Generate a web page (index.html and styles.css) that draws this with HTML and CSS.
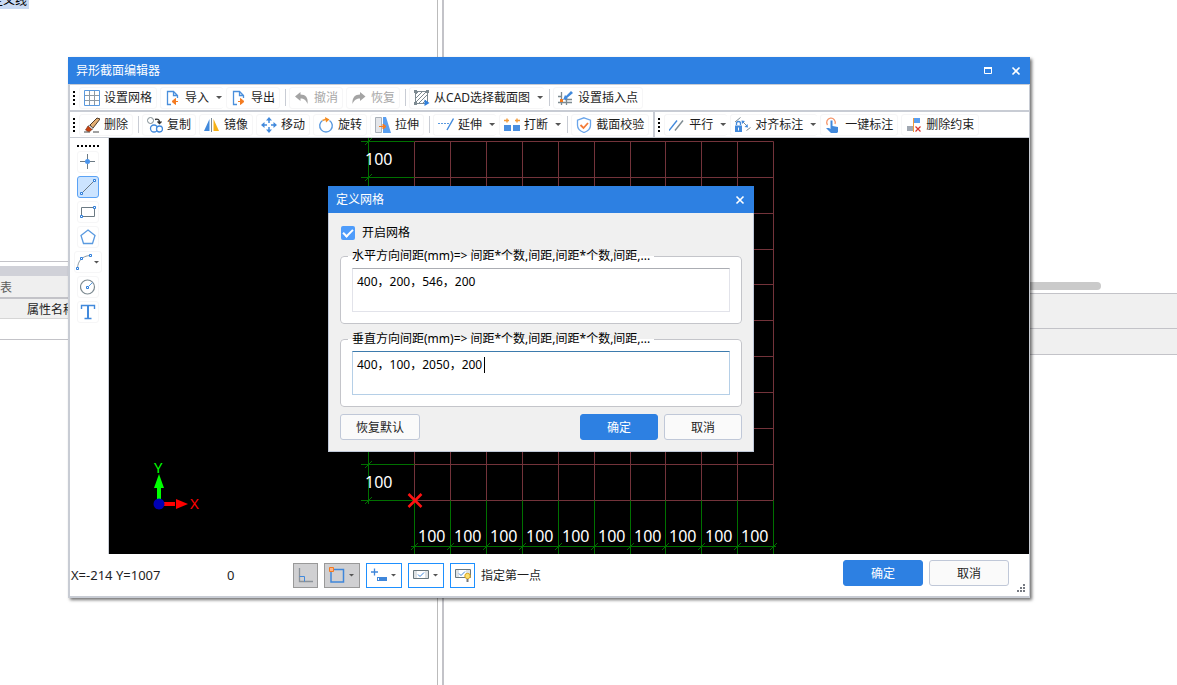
FILE: index.html
```html
<!DOCTYPE html>
<html lang="zh-CN">
<head>
<meta charset="utf-8">
<title>异形截面编辑器</title>
<link rel="stylesheet" href="styles.css">
</head>
<body>
<div class="desktop">
  <div class="desk-left">
    <div class="desk-tree"><span class="tree-item">定义线</span></div>
    <div class="desk-band"></div>
    <div class="desk-tab">表</div>
    <div class="desk-head">属性名称</div>
    <div class="desk-row"></div>
  </div>
  <div class="desk-split"></div>
  <div class="desk-right">
    <div class="desk-view"><div class="desk-scroll"></div></div>
    <div class="desk-panel"></div>
    <div class="desk-panel desk-panel-last"></div>
  </div>
</div>

<main class="window">
  <header class="titlebar">
    <h1>异形截面编辑器</h1>
    <button class="win-btn" aria-label="最大化"><svg width="10" height="10"><path d="M1.500 2h7v5.500h-7z" fill="none" stroke="#fff"/><path d="M1 2h8" stroke="#fff" stroke-width="2"/></svg></button>
    <button class="win-btn" aria-label="关闭"><svg width="10" height="10"><path d="M1.500 1.500l7 7M8.500 1.500l-7 7" stroke="#fff" stroke-width="1.600"/></svg></button>
  </header>

  <div class="toolbar-row">
    <div class="toolbar">
      <i class="grip"></i>
      <button class="tool"><svg class="ic"><path d="M5.500 1v14M10.500 1v14M1 5.500h14M1 10.500h14" stroke="#8e9aa4"/><path d="M.5.5h15v15H.5z" fill="none" stroke="#5a9ae0"/></svg>设置网格</button>
      <button class="tool drop"><svg class="ic"><path d="M6 14.500H2.500V1.500h6l4 4V8M8.500 1.500v4h4" fill="none" stroke="#4a8fdc" stroke-width="1.300"/><path d="M13 11.500H9M10.500 8.500l-3.500 3 3.500 3z" fill="#f47b20" stroke="#f47b20"/></svg>导入<i class="caret"></i></button>
      <button class="tool"><svg class="ic"><path d="M6 14.500H2.500V1.500h6l4 4V8M8.500 1.500v4h4" fill="none" stroke="#4a8fdc" stroke-width="1.300"/><path d="M7 11.500h4M9.500 8.500l3.500 3-3.500 3z" fill="#f47b20" stroke="#f47b20"/></svg>导出</button>
      <i class="sep"></i>
      <button class="tool" disabled><svg class="ic"><path d="M1 6.500L6.500 2v2.500c5 0 8 3 7 9.500C12 10 10 8.500 6.500 8.500V11z" fill="#a4a4a4"/></svg>撤消</button>
      <button class="tool" disabled><svg class="ic"><path d="M14.500 6.500L9 2v2.500c-5 0-8 3-7.500 9.500C3 10 5.500 8.500 9 8.500V11z" fill="#a4a4a4"/></svg>恢复</button>
      <i class="sep"></i>
      <button class="tool drop"><svg class="ic"><path d="M2 12L12 2M2 8l6-6M4 14l9-9M8 14l4-4M2 4l2-2" stroke="#7d8a91"/><path d="M1.500 1.500h12v12h-12z" fill="none" stroke="#7d8a91"/><path d="M0 0h3v3H0zM12 0h3v3h-3zM0 12h3v3H0z" fill="#7d8a91"/><path d="M10.500 9.500l5 3.500-5 3z" fill="#2f7fdc"/></svg>从CAD选择截面图<i class="caret"></i></button>
      <i class="sep"></i>
      <button class="tool"><svg class="ic"><path d="M3.500 2v13M8.500 8v7M0 6.500h4M7 9.500h7M0 12.500h14" stroke="#7d8a91" stroke-width="1.300"/><path d="M5 10l2-5 1 1 5-5 2 2-6 5 .5 1z" fill="#4189dc"/><path d="M2 9h3v3H2z" fill="#f47b20"/></svg>设置插入点</button>
    </div>
  </div>

  <div class="toolbar-row">
    <div class="toolbar">
      <i class="grip"></i>
      <button class="tool"><svg class="ic"><path d="M0 15h6M9 15h6" stroke="#444"/><path d="M6 8l7-7 3 1-7 9z" fill="#e2ae72" stroke="#4f3928"/><path d="M5 8l4 3-1 2-4-3z" fill="#f2f2f2" stroke="#555" stroke-width=".6"/><path d="M4 9l4 3.500C6 15 4 15 1.500 13z" fill="#c9410e" stroke="#703016" stroke-width=".6"/></svg>删除</button>
      <i class="sep"></i>
      <button class="tool"><svg class="ic"><circle cx="3.500" cy="3.500" r="3" fill="none" stroke="#7d8a91"/><circle cx="7" cy="11.500" r="3.500" fill="none" stroke="#4189dc" stroke-width="1.300"/><circle cx="12.500" cy="12" r="3" fill="#fff" stroke="#4189dc" stroke-width="1.300"/><path d="M8 2.500c3-1 4.500 0 4.500 3M10.500 4.500l2 2 2-2" fill="none" stroke="#333" stroke-width="1.400"/></svg>复制</button>
      <button class="tool"><svg class="ic"><path d="M5.500 2v12H0z" fill="#4189dc"/><path d="M7.500 1v14" stroke="#7d8a91"/><path d="M9.500 2v12H15z" fill="#f7b116"/></svg>镜像</button>
      <button class="tool"><svg class="ic"><path d="M8 2v4M8 10v4M2 8h4M10 8h4" stroke="#4189dc" stroke-width="1.500"/><path d="M8 0l3 3.500H5zM8 16l3-3.500H5zM0 8l3.500-3v6zM16 8l-3.500-3v6z" fill="#4189dc"/></svg>移动</button>
      <button class="tool"><svg class="ic"><path d="M11.500 3.500a6.300 6.300 0 1 1-7 0" fill="none" stroke="#5a9ae0" stroke-width="1.400"/><path d="M4.500 3.500l4-1.500" stroke="#f29a38" stroke-width="1.400"/><path d="M7 0l4.500 2.500L8 5.500z" fill="#f58a1c"/></svg>旋转</button>
      <button class="tool"><svg class="ic"><path d="M.5.5h6v15h-6z" fill="#e4e6ea" stroke="#a9b0b8"/><path d="M8 0h3l5 16H8z" fill="#5a9ff0"/><path d="M4 9.500h5M8 7l3 2.500L8 12z" stroke="#f47b20" fill="#f47b20"/></svg>拉伸</button>
      <i class="sep"></i>
      <button class="tool drop"><svg class="ic"><path d="M0 6.500h11" stroke="#5a9ae0" stroke-dasharray="2 1"/><path d="M15.500 1.500L9 13" stroke="#4189dc" stroke-width="1.400"/></svg>延伸<i class="caret"></i></button>
      <button class="tool drop"><svg class="ic"><path d="M0 8h7v6H0zM9 8h7v6H9z" fill="#4a8fe0"/><path d="M0 3.500h5M3 1.500v4M11 3.500h5M13 1.500v4" stroke="#f29a38" stroke-width="1.400"/></svg>打断<i class="caret"></i></button>
      <i class="sep"></i>
      <button class="tool"><svg class="ic"><path d="M8 .8l6.500 2.400v5C14.500 11.500 12 14 8 15.500 4 14 1.500 11.500 1.500 8.200v-5z" fill="#fff" stroke="#6aa5ea" stroke-width="1.300"/><path d="M4.500 8l3 3 4.500-5" fill="none" stroke="#f47b38" stroke-width="1.800"/></svg>截面校验</button>
    </div>
    <div class="toolbar">
      <i class="grip"></i>
      <button class="tool drop"><svg class="ic"><path d="M0 13.500L8 3.500" stroke="#4189dc" stroke-width="1.400"/><path d="M6 13.500l8-10" stroke="#7d8a91" stroke-width="1.400"/></svg>平行<i class="caret"></i></button>
      <button class="tool drop"><svg class="ic"><path d="M0 8.500h7V15H0z" fill="#4189dc"/><path d="M1.500 8V6.500a2 2 0 0 1 4 0V8" fill="none" stroke="#4189dc" stroke-width="1.300"/><path d="M3 10.500h1v3H3z" fill="#fff"/><path d="M0 5l5.500-4.500M8 5l4 4M11.500 13.500l4-3" stroke="#7d8a91"/><path d="M6.500 3.500l3.500.5-3 3zM13 10.500l-3.500-.5 3-3z" fill="#4189dc"/></svg>对齐标注<i class="caret"></i></button>
      <button class="tool"><svg class="ic"><path d="M2.500 8a4.300 4.300 0 1 1 7.500-1" fill="none" stroke="#f5956a" stroke-width="1.300"/><path d="M5.500 3.500h2V9l5.500 1v5l-1 1H6l-5-5h3l1.500 1z" fill="#4189dc"/></svg>一键标注</button>
      <button class="tool"><svg class="ic"><path d="M1 9h6v5H1z" fill="#a1a8b2"/><path d="M8 1h6v5H8z" fill="#5a9ff0"/><path d="M7.500 1v14" stroke="#f29a38"/><path d="M9.500 9.500l5 5M14.500 9.500l-5 5" stroke="#d9342b" stroke-width="1.200"/></svg>删除约束</button>
    </div>
  </div>

  <div class="work">
    <nav class="side" aria-label="绘图工具">
      <i class="grip grip-h"></i>
      <button class="draw" aria-label="点"><svg class="ic"><path d="M7.500 0v5M7.500 10v5M0 7.500h5M10 7.500h5" stroke="#6c7a84"/><circle cx="7.500" cy="7.500" r="2.500" fill="#4a94ec"/></svg></button>
      <button class="draw active" aria-label="直线"><svg class="ic"><path d="M1 15L15 1" stroke="#6c7a84"/><path d="M.5 13.500h2v2h-2zM13.500.5h2v2h-2z" class="node"/></svg></button>
      <button class="draw" aria-label="矩形"><svg class="ic"><path d="M1.500 3.500h13v9h-13z" fill="none" stroke="#6c7a84"/><path d="M.5 11.500h2v2h-2zM13.500 2.500h2v2h-2z" class="node"/></svg></button>
      <button class="draw" aria-label="多边形"><svg class="ic"><path d="M8 1l7 5.500-2.500 8h-9L1 6.500z" fill="none" stroke="#5a9ae0" stroke-width="1.300"/></svg></button>
      <button class="draw draw-drop" aria-label="圆弧"><svg class="ic"><path d="M1.500 14C2 7 6 2 14 1.500" fill="none" stroke="#8d9aa4"/><path d="M.5 13.500h2v2h-2zM4.500 3.500h2v2h-2zM13.500.5h2v2h-2z" class="node"/></svg><i class="caret"></i></button>
      <button class="draw" aria-label="圆"><svg class="ic"><circle cx="7.500" cy="8" r="7" fill="none" stroke="#7d8a91" stroke-width="1.200"/><path d="M9 7l3.500-3.500" stroke="#5a9ae0"/><path d="M6.500 7.500h2v2h-2z" class="node"/></svg></button>
      <button class="draw" aria-label="文字"><svg class="ic"><path d="M1.500 5V1.500h13V5M4.500 14.500h7" fill="none" stroke="#4189dc" stroke-width="1.400"/><path d="M8 1.500v13" stroke="#4189dc" stroke-width="2"/></svg></button>
    </nav>

    <div class="canvas">
      <svg class="drawing" width="920" height="416">
        <path class="grid" d="M305.500 3.500v359M341.500 3.500v359M377.500 3.500v359M413.500 3.500v359M449.500 3.500v359M485.500 3.500v359M521.500 3.500v359M556.500 3.500v359M592.500 3.500v359M628.500 3.500v359M664.500 3.500v359M305.500 3.500h359M305.500 39.500h359M305.500 75.500h359M305.500 111.500h359M305.500 146.500h359M305.500 182.500h359M305.500 218.500h359M305.500 254.500h359M305.500 290.500h359M305.500 326.500h359M305.500 362.500h359"/>
        <path class="dim" d="M259.500 0v366M252 3.500h53.500M252 39.500h53.500M252 326.500h53.500M252 362.500h53.500"/>
        <path class="dim" d="M302 408.500h365M305.500 362.500V416M341.500 362.500V416M377.500 362.500V416M413.500 362.500V416M449.500 362.500V416M485.500 362.500V416M521.500 362.500V416M556.500 362.500V416M592.500 362.500V416M628.500 362.500V416M664.500 362.500V416"/>
        <path class="dim" d="M256 7l7-7M256 43l7-7M256 330l7-7M256 366l7-7M302 412l7-7M338 412l7-7M374 412l7-7M410 412l7-7M446 412l7-7M482 412l7-7M518 412l7-7M553 412l7-7M589 412l7-7M625 412l7-7M661 412l7-7"/>
        <g class="dim-text">
          <text x="256" y="27">100</text><text x="256" y="314">100</text><text x="256" y="350">100</text>
          <text x="309" y="404">100</text><text x="345" y="404">100</text><text x="381" y="404">100</text><text x="417" y="404">100</text><text x="453" y="404">100</text><text x="489" y="404">100</text><text x="525" y="404">100</text><text x="560" y="404">100</text><text x="596" y="404">100</text><text x="632" y="404">100</text>
        </g>
        <path d="M299.500 356l13 13M312.500 356l-13 13" stroke="#ff1212" stroke-width="2.500"/>
        <path d="M50 366v-16" stroke="#0f0" stroke-width="4"/><path d="M50 336l5 14H45z" fill="#0f0"/>
        <path d="M50 366h16" stroke="#f00" stroke-width="4"/><path d="M79 366l-12-5v10z" fill="#f00"/>
        <circle cx="50" cy="366" r="5.500" fill="#0000b4"/>
        <text class="axis" x="45" y="335" fill="#0f0">Y</text><text class="axis" x="81" y="371" fill="#f00">X</text>
      </svg>
    </div>
  </div>

  <footer class="status">
    <span class="coords">X=-214 Y=1007</span>
    <span class="angle">0</span>
    <div class="modes">
      <button class="mode on" aria-label="正交"><svg class="ic"><path d="M1.500 1v13.500H15" fill="none" stroke="#8b9299" stroke-width="1.300"/><path d="M1.500 9.500h5v5" fill="none" stroke="#4189dc"/></svg></button>
      <button class="mode mode-drop on" aria-label="捕捉"><svg class="ic"><path d="M2 2.500h12.500v12.500H2z" fill="none" stroke="#3f86da" stroke-width="1.500"/><path d="M.5.5h4v4h-4z" fill="#f9b48a" stroke="#f47b20"/></svg><i class="caret"></i></button>
      <button class="mode mode-drop" aria-label="动态输入"><svg class="ic"><path d="M0 5h7M3.500 1.500v7" stroke="#3f86da" stroke-width="1.300"/><path d="M6 10h10v4H6z" fill="#3f86da"/><path d="M7 11h1v2H7z" fill="#fff"/></svg><i class="caret"></i></button>
      <button class="mode mode-drop" aria-label="标注显示"><svg class="ic"><path d="M.5 3.500h15v8H.5z" fill="#dde1e4" stroke="#68767c"/><path d="M4 4h8v7H4z" fill="#fff"/><path d="M5 7.500l2 2 4-4" fill="none" stroke="#3f86da"/></svg><i class="caret"></i></button>
      <button class="mode" aria-label="提示"><svg class="ic"><path d="M.5 2.500h15v8H.5z" fill="#dde1e4" stroke="#68767c"/><path d="M4 3h7v7H4z" fill="#fff"/><path d="M4 6.500l2 2 4-4" fill="none" stroke="#3f86da"/><circle cx="12.500" cy="9" r="2.700" fill="#fbe070" stroke="#d9a520"/><path d="M11.500 12h2v3h-2z" fill="#777"/></svg></button>
    </div>
    <span class="hint">指定第一点</span>
    <div class="actions">
      <button class="btn primary">确定</button>
      <button class="btn">取消</button>
    </div>
    <svg class="size-grip" width="9" height="9"><path d="M6 0h2v2H6zM3 3h2v2H3zM6 3h2v2H6zM0 6h2v2H0zM3 6h2v2H3zM6 6h2v2H6z" fill="#777b83"/></svg>
  </footer>
</main>

<section class="dialog" role="dialog" aria-labelledby="dialog-title">
  <header class="titlebar dialog-title">
    <h2 id="dialog-title">定义网格</h2>
    <button class="win-btn" aria-label="关闭"><svg width="10" height="10"><path d="M1.500 1.500l7 7M8.500 1.500l-7 7" stroke="#fff" stroke-width="1.600"/></svg></button>
  </header>
  <form class="dialog-body">
    <label class="check"><input type="checkbox" checked>开启网格</label>
    <fieldset class="group">
      <legend id="h-label">水平方向间距(mm)=&gt; 间距*个数,间距,间距*个数,间距,...</legend>
      <div class="field"><textarea aria-labelledby="h-label" spellcheck="false">400，200，546，200</textarea></div>
    </fieldset>
    <fieldset class="group">
      <legend id="v-label">垂直方向间距(mm)=&gt; 间距*个数,间距,间距*个数,间距,...</legend>
      <div class="field"><textarea class="focused" aria-labelledby="v-label" spellcheck="false">400，100，2050，200</textarea><i class="cursor"></i></div>
    </fieldset>
    <div class="dialog-actions">
      <button type="button" class="btn reset">恢复默认</button>
      <button type="button" class="btn primary">确定</button>
      <button type="button" class="btn">取消</button>
    </div>
  </form>
</section>
</body>
</html>
```

FILE: styles.css
```css
* { box-sizing: border-box; }

body {
  margin: 0;
  height: 100vh;
  overflow: hidden;
  background: #fff;
  color: #1e1e1e;
}

body, button, textarea {
  font-family: "Noto Sans", "Noto Sans CJK SC", sans-serif;
  font-size: 12px;
  line-height: 16px;
}

h1, h2 { margin: 0; flex: 1; font-size: 12px; font-weight: 400; }
button { margin: 0; color: inherit; }
fieldset { min-width: 0; margin: 0; }

/* application behind the editor */
.desktop { display: grid; grid-template-columns: 437px 7px 1fr; height: 100%; }
.desk-tree { height: 262px; border-bottom: 1px solid #c3c3c8; }
.tree-item {
  display: flex; justify-content: flex-end; align-items: flex-end;
  width: 29px; height: 9px; padding-right: 2px; overflow: hidden;
  background: #c9daf3; white-space: nowrap; color: #000;
}
.desk-band { height: 10px; margin-top: 4px; background: #d0d1d8; }
.desk-tab { height: 23px; padding-top: 4px; background: #efefef; border-bottom: 2px solid #c3c3c8; color: #5c5c5c; }
.desk-head { height: 20px; padding: 3px 0 0 27px; background: #f0f0f0; border-bottom: 1px solid #d6d6d6; }
.desk-row { height: 21px; border-bottom: 1px solid #c3c3c8; }
.desk-split { border-left: 1px solid #bbb; border-right: 2px solid #c3c3c8; }
.desk-view { display: flex; align-items: flex-end; height: 293px; padding: 0 76px 3px 0; }
.desk-scroll { flex: 1; height: 8px; border-radius: 4px; background: #cacaca; }
.desk-panel { height: 35px; background: #f0f0f0; border-top: 1px solid #c3c3c8; }
.desk-panel-last { height: 27px; border-bottom: 1px solid #c3c3c8; }

/* editor window */
.window {
  position: absolute; left: 68px; top: 57px; right: 147px; bottom: 87px;
  display: flex; flex-direction: column;
  background: #fff;
  border: solid #c8ccd4; border-width: 0 1px 2px 2px;
  box-shadow: 2px 2px 3px rgba(0, 0, 0, .55);
}
.titlebar {
  display: flex; align-items: center; height: 27px; flex: none;
  margin: 0 -1px 0 -2px; padding: 0 4px 0 8px;
  background: #2d80e2; color: #fff;
}
.win-btn { display: grid; place-items: center; width: 20px; height: 20px; padding: 0; margin-left: 8px; border: 0; background: none; }

.toolbar-row { display: flex; flex: none; height: 27px; border-top: 1px solid #c8ccd4; border-bottom: 1px solid #c8ccd4; }
.toolbar { display: flex; align-items: center; gap: 3px; }
.toolbar + .toolbar { border-left: 2px solid #c8ccd4; margin-left: 4px; }
.grip { width: 2px; height: 14px; margin: 0 1px 0 3px; background: repeating-linear-gradient(#000 0 2px, transparent 2px 4px); }
.tool {
  display: flex; align-items: center; gap: 4px; height: 22px; padding: 0 4px;
  border: 1px solid #f6f6f7; border-radius: 3px; background: #fff; white-space: nowrap;
}
.tool.drop { padding-right: 0; border-right-width: 0; }
.tool:disabled { color: #a8a8a8; }
.ic { display: block; flex: none; width: 16px; height: 16px; }
.caret { flex: none; width: 6px; height: 3px; margin: 0 1px 0 3px; background: #555; clip-path: polygon(0 0, 100% 0, 50% 100%); }
.sep { width: 1px; height: 17px; margin: 0 0 0 2px; background: #c8ccd4; }

.work { display: flex; flex: 1; min-height: 0; }
.side { display: flex; flex-direction: column; align-items: center; gap: 3px; width: 39px; padding: 7px 2px 0 0; border-right: 1px solid #c8ccd4; }
.grip-h { width: 22px; height: 2px; margin: 0 0 1px; background: repeating-linear-gradient(90deg, #000 0 2px, transparent 2px 4px); }
.draw { display: flex; align-items: center; justify-content: center; width: 22px; height: 22px; padding: 0; border: 1px solid #f6f6f7; border-radius: 3px; background: #fff; }
.draw.active { background: #cce4ff; border-color: #5aa2f5; }
.draw-drop { width: 28px; }
.draw-drop .caret { margin-left: 2px; }
.node { fill: #fff; stroke: #2f7fdc; }

.canvas { flex: 1; overflow: hidden; background: #000; }
.drawing { display: block; }
.grid { stroke: #73333a; }
.dim { stroke: #007000; fill: none; }
.dim-text { font-size: 16px; fill: #fff; }
.axis { font-size: 15px; }

.status { display: flex; flex: none; align-items: center; height: 42px; padding-left: 1px; }
.coords { width: 156px; font-size: 13px; }
.angle { width: 66px; font-size: 13px; }
.modes { display: flex; gap: 6px; }
.mode { display: flex; align-items: center; justify-content: center; width: 25px; height: 25px; padding: 0; border: 1px solid #1e90ff; background: #fff; }
.mode-drop { width: 36px; }
.mode .caret { margin-left: 4px; }
.mode.on { background: #d0d0d2; border-color: #999; }
.hint { flex: 1; padding: 2px 0 0 6px; }
.actions { display: flex; gap: 6px; margin-bottom: 4px; }
.actions .btn { width: 80px; }
.size-grip { align-self: flex-end; margin: 0 3px 3px 8px; }

.btn { width: 78px; height: 26px; padding: 2px 0 0; border: 1px solid #c0c8d8; border-radius: 3px; background: #fafafa; }
.btn.primary { background: #2d80e2; border-color: #2d80e2; color: #fff; }

/* grid settings dialog */
.dialog { position: absolute; left: 328px; top: 186px; width: 426px; background: #f0f0f0; border: 1px solid #c0c8d8; border-top: 0; color: #000; }
.dialog-title { margin: 0 -1px; }
.dialog-body { padding: 10px 11px 11px; }
.check { display: flex; align-items: center; gap: 7px; height: 20px; margin-bottom: 5px; }
.check input { appearance: none; width: 14px; height: 14px; margin: 0 0 0 1px; border-radius: 2px; background: #4e9cfb; display: grid; place-items: center; }
.check input:checked::before { content: ""; width: 8px; height: 4px; margin-bottom: 3px; border: solid #fff; border-width: 0 0 2px 2px; rotate: -45deg; }
.group { padding: 4px 11px 11px; margin-bottom: 7px; border: 1px solid #c4c5ca; border-radius: 4px; background: #fff; }
.group legend { height: 16px; margin-left: -4px; padding: 0 4px; white-space: nowrap; }
.field { position: relative; }
.field textarea {
  display: block; width: 100%; height: 44px; padding: 5px 4px; margin: 0;
  border: 1px solid #e2e3ea; border-top-color: #abadb3; border-radius: 0;
  color: #000; resize: none; outline: 0; overflow: hidden;
}
.field .focused { border-color: #b5cfe7; border-top-color: #3d7bad; }
.cursor { position: absolute; left: 132px; top: 6px; width: 1px; height: 16px; background: #000; }
.dialog-actions { display: flex; gap: 6px; color: #1e1e1e; }
.reset { width: 80px; margin-right: auto; }
```
